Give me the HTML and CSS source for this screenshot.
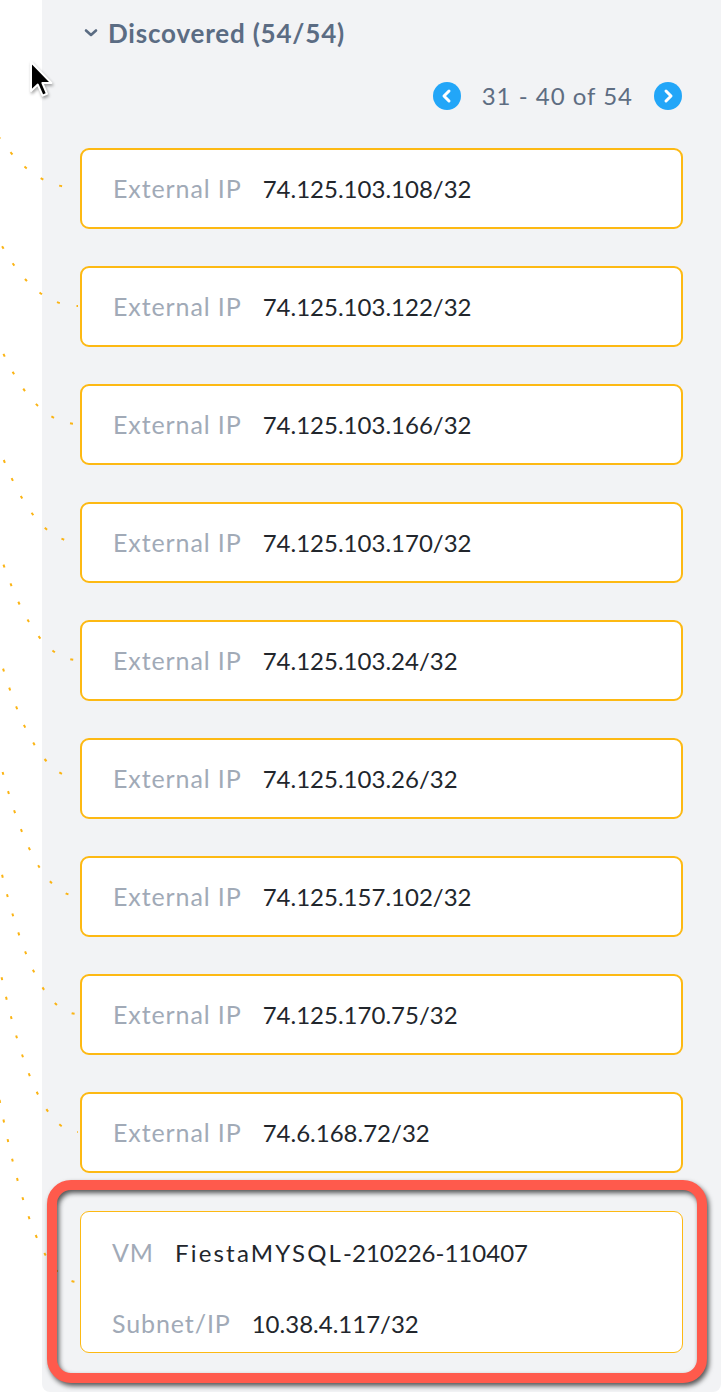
FILE: index.html
```html
<!DOCTYPE html>
<html>
<head>
<meta charset="utf-8">
<link rel="stylesheet" href="styles.css">
</head>
<body>
<div class="stage">
  <section class="panel">
    <div class="group-head">
      <svg class="chev" width="14" height="10" viewBox="0 0 14 10"><path d="M2 2.5 L7 7 L12 2.5" fill="none" stroke="#5b6c83" stroke-width="2.6" stroke-linecap="round" stroke-linejoin="round"/></svg>
      <span class="group-title">Discovered (54/54)</span>
    </div>
    <div class="pager">
      <span class="pg-btn"><svg width="28" height="28" viewBox="0 0 28 28"><circle cx="14" cy="14" r="14" fill="#22a6f8"/><path d="M16 9 L11 14 L16 19" fill="none" stroke="#fff" stroke-width="3" stroke-linecap="round" stroke-linejoin="round"/></svg></span>
      <span class="pg-text">31 - 40 of 54</span>
      <span class="pg-btn"><svg width="28" height="28" viewBox="0 0 28 28"><circle cx="14" cy="14" r="14" fill="#22a6f8"/><path d="M12 9 L17 14 L12 19" fill="none" stroke="#fff" stroke-width="3" stroke-linecap="round" stroke-linejoin="round"/></svg></span>
    </div>
    <div class="cards">
      <div class="card"><div class="row"><span class="lbl">External IP</span><span class="val">74.125.103.108/32</span></div></div>
      <div class="card"><div class="row"><span class="lbl">External IP</span><span class="val">74.125.103.122/32</span></div></div>
      <div class="card"><div class="row"><span class="lbl">External IP</span><span class="val">74.125.103.166/32</span></div></div>
      <div class="card"><div class="row"><span class="lbl">External IP</span><span class="val">74.125.103.170/32</span></div></div>
      <div class="card"><div class="row"><span class="lbl">External IP</span><span class="val">74.125.103.24/32</span></div></div>
      <div class="card"><div class="row"><span class="lbl">External IP</span><span class="val">74.125.103.26/32</span></div></div>
      <div class="card"><div class="row"><span class="lbl">External IP</span><span class="val">74.125.157.102/32</span></div></div>
      <div class="card"><div class="row"><span class="lbl">External IP</span><span class="val">74.125.170.75/32</span></div></div>
      <div class="card"><div class="row"><span class="lbl">External IP</span><span class="val">74.6.168.72/32</span></div></div>
      <div class="card card-vm">
        <div class="row"><span class="lbl">VM</span><span class="val"><span class="alpha">FiestaMYSQL</span>-210226-110407</span></div>
        <div class="row"><span class="lbl">Subnet/IP</span><span class="val">10.38.4.117/32</span></div>
      </div>
    </div>
  </section>

  <svg class="links" width="728" height="1400" viewBox="0 0 728 1400">
    <g fill="none" stroke="#fbb414" stroke-width="2" stroke-dasharray="3 17">
      <path d="M-218 -227 C -70 -227, -70 188, 78 188"/>
      <path d="M-218 -227 C -70 -227, -70 306, 78 306"/>
      <path d="M-218 -227 C -70 -227, -70 424, 78 424"/>
      <path d="M-218 -227 C -70 -227, -70 542, 78 542"/>
      <path d="M-218 -227 C -70 -227, -70 660, 78 660"/>
      <path d="M-218 -227 C -70 -227, -70 778, 78 778"/>
      <path d="M-218 -227 C -70 -227, -70 896, 78 896"/>
      <path d="M-218 -227 C -70 -227, -70 1014, 78 1014"/>
      <path d="M-218 -227 C -70 -227, -70 1132, 78 1132"/>
      <path d="M-218 -227 C -70 -227, -70 1282, 78 1282"/>
    </g>
  </svg>

  <div class="highlight"></div>

  <svg class="cursor" width="26" height="38" viewBox="0 0 13 19">
    <path d="M1 1 L1 15.5 L4.4 12.3 L6.8 17.8 L9 16.9 L6.7 11.5 L11.2 11.5 Z" fill="#000" stroke="#fff" stroke-width="1" stroke-linejoin="round"/>
  </svg>
</div>
</body>
</html>
```
FILE: styles.css
```css
* { box-sizing: border-box; }
html, body { margin: 0; padding: 0; background: #fff; }
body { font-family: "Lato", "Liberation Sans", sans-serif; }

.stage { position: relative; width: 728px; height: 1400px; overflow: hidden; }

.panel {
  margin-left: 42px;
  width: 679px;
  height: 1392px;
  background: #f2f3f5;
  border-radius: 0 0 8px 8px;
  padding: 18px 38px 0 38px;
}

.group-head {
  display: flex;
  align-items: center;
  height: 30px;
  padding-left: 4px;
  gap: 10px;
}
.group-title {
  font-size: 26px;
  font-weight: 700;
  letter-spacing: 0.8px;
  color: #5b6c83;
  line-height: 30px;
}

.pager {
  margin-top: 34px;
  height: 28px;
  display: flex;
  justify-content: flex-end;
  align-items: center;
  gap: 21px;
  padding-right: 1px;
}
.pg-btn { display: flex; width: 28px; height: 28px; }
.pg-text { font-size: 24px; letter-spacing: 1px; color: #5e6d82; line-height: 28px; }

.cards {
  margin-top: 38px;
  display: flex;
  flex-direction: column;
  gap: 37px;
}
.card {
  background: #fff;
  border: 2px solid #fdb913;
  border-radius: 9px;
  height: 81px;
  padding-left: 31px;
  display: flex;
  flex-direction: column;
  justify-content: center;
}
.card-vm {
  margin-top: 1px;
  height: 142px;
  border-width: 1.5px;
  justify-content: flex-start;
  padding-top: 25px;
  gap: 40px;
}
.row { display: flex; align-items: baseline; gap: 21px; line-height: 30px; }
.lbl { font-size: 25px; letter-spacing: 0.9px; color: #a1aab7; }
.val { font-size: 24px; color: #22262c; }
.alpha { letter-spacing: 2.2px; }

.links { position: absolute; left: 0; top: 0; pointer-events: none; }

.highlight {
  position: absolute;
  left: 47px;
  top: 1180px;
  width: 660px;
  height: 203px;
  border: 10px solid #ff5a4c;
  border-radius: 24px;
  filter: drop-shadow(2px 3px 2.5px rgba(0,0,0,0.65));
}

.cursor {
  position: absolute;
  left: 29px;
  top: 60px;
  filter: drop-shadow(1px 2px 1.5px rgba(0,0,0,0.35));
}
```
